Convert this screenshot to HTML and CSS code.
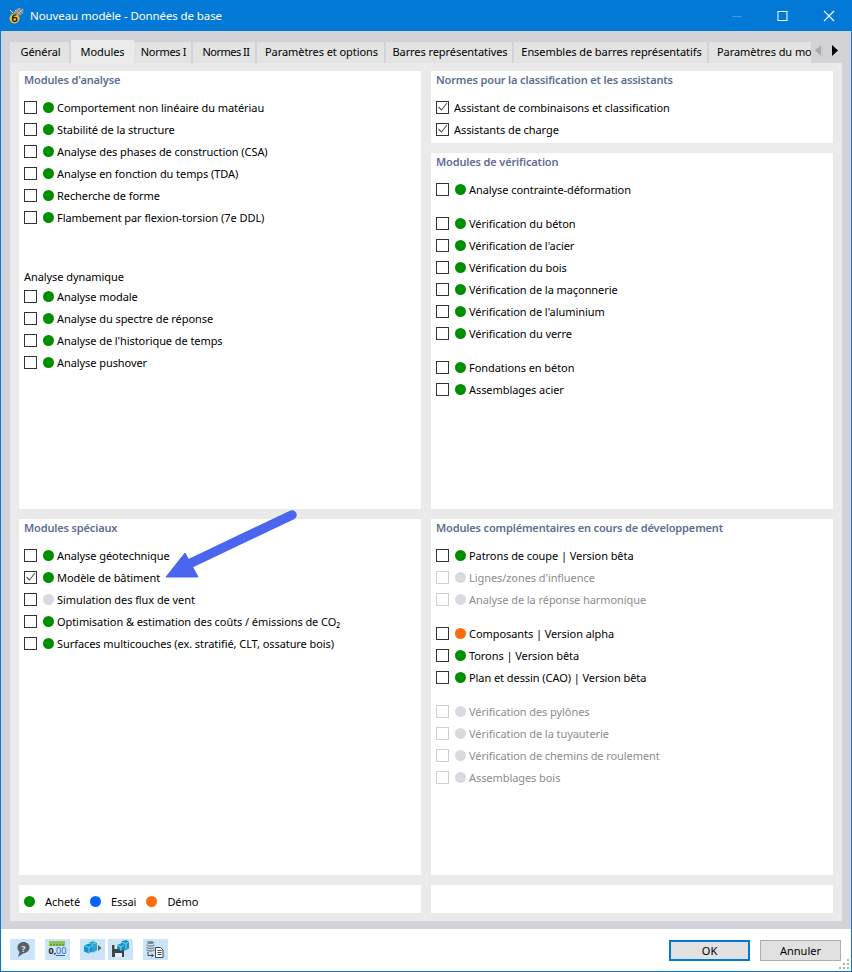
FILE: index.html
```html
<!DOCTYPE html>
<html lang="fr">
<head>
<meta charset="utf-8">
<title>Nouveau modèle - Données de base</title>
<link rel="stylesheet" href="styles.css">
</head>
<body>
<div class="window">
  <header class="titlebar">
    <svg class="app-icon" width="20" height="20" viewBox="0 0 20 20"><path d="M6 6 L11 2 L17 3 L16 8 L11 10Z" fill="#7f828c"/><path d="M8 4l6 5M11 3l5 4M7 7l6-5M10 9l6-6" stroke="#c9ccd4" stroke-width=".7"/><path d="M3 4l3 3" stroke="#e8e2c8" stroke-width="1"/><circle cx="7.500" cy="12.500" r="5" fill="#eec02f"/><path d="M9.500 9c-2-.6-4 .6-4 3.400 0 2 1 3 2.200 3s2.100-.9 2.100-2-.9-1.900-2-1.900-1.800.5-2.100 1.100" fill="none" stroke="#30250a" stroke-width="1.400"/></svg>
    <span class="title">Nouveau modèle - Données de base</span>
    <div class="win-controls">
      <svg width="46" height="30" viewBox="0 0 46 30"><path d="M18 15.500h10" stroke="#3f96e0" stroke-width="1"/></svg>
      <svg width="46" height="30" viewBox="0 0 46 30"><rect x="18" y="10.500" width="9" height="9" fill="none" stroke="#fff" stroke-width="1"/></svg>
      <svg width="46" height="30" viewBox="0 0 46 30"><path d="M18 10l10 10M28 10l-10 10" stroke="#fff" stroke-width="1.100"/></svg>
    </div>
  </header>
  <div class="body">
    <div class="tabstrip">
      <div class="tabs">
        <span class="tab">Général</span>
        <span class="tab active">Modules</span>
        <span class="tab">Normes I</span>
        <span class="tab">Normes II</span>
        <span class="tab">Paramètres et options</span>
        <span class="tab">Barres représentatives</span>
        <span class="tab">Ensembles de barres représentatifs</span>
        <span class="tab">Paramètres du modèle</span>
      </div>
      <div class="tab-arrows">
        <svg width="11" height="13" viewBox="0 0 11 13"><path d="M6 1v11L0 6.500z" fill="#a9a9ad"/><path d="M7.500 1v11" stroke="#c6c6ca"/></svg>
        <svg width="9" height="13" viewBox="0 0 9 13"><path d="M1 1v11l6-5.500z" fill="#000"/></svg>
      </div>
    </div>
    <div class="sheet">
      <section class="panel p-analysis">
        <h2>Modules d'analyse</h2>
        <div class="group">
          <label class="row"><i class="cb"></i><i class="dot g"></i><span>Comportement non linéaire du matériau</span></label>
          <label class="row"><i class="cb"></i><i class="dot g"></i><span>Stabilité de la structure</span></label>
          <label class="row"><i class="cb"></i><i class="dot g"></i><span>Analyse des phases de construction (CSA)</span></label>
          <label class="row"><i class="cb"></i><i class="dot g"></i><span>Analyse en fonction du temps (TDA)</span></label>
          <label class="row"><i class="cb"></i><i class="dot g"></i><span>Recherche de forme</span></label>
          <label class="row"><i class="cb"></i><i class="dot g"></i><span>Flambement par flexion-torsion (7e DDL)</span></label>
        </div>
        <div class="subhead">Analyse dynamique</div>
        <div class="group tight">
          <label class="row"><i class="cb"></i><i class="dot g"></i><span>Analyse modale</span></label>
          <label class="row"><i class="cb"></i><i class="dot g"></i><span>Analyse du spectre de réponse</span></label>
          <label class="row"><i class="cb"></i><i class="dot g"></i><span>Analyse de l'historique de temps</span></label>
          <label class="row"><i class="cb"></i><i class="dot g"></i><span>Analyse pushover</span></label>
        </div>
      </section>
      <div class="col-right-top">
        <section class="panel p-norms">
          <h2>Normes pour la classification et les assistants</h2>
          <div class="group">
            <label class="row nodot"><i class="cb"><svg class="tick" width="11" height="11" viewBox="0 0 11 11"><path d="M1.500 5l3 3 5.500-7" fill="none" stroke="#555" stroke-width="1.100"/></svg></i><span>Assistant de combinaisons et classification</span></label>
            <label class="row nodot"><i class="cb"><svg class="tick" width="11" height="11" viewBox="0 0 11 11"><path d="M1.500 5l3 3 5.500-7" fill="none" stroke="#555" stroke-width="1.100"/></svg></i><span>Assistants de charge</span></label>
          </div>
        </section>
        <section class="panel p-verif">
          <h2>Modules de vérification</h2>
          <div class="group">
            <label class="row"><i class="cb"></i><i class="dot g"></i><span>Analyse contrainte-déformation</span></label>
          </div>
          <div class="group sep">
            <label class="row"><i class="cb"></i><i class="dot g"></i><span>Vérification du béton</span></label>
            <label class="row"><i class="cb"></i><i class="dot g"></i><span>Vérification de l'acier</span></label>
            <label class="row"><i class="cb"></i><i class="dot g"></i><span>Vérification du bois</span></label>
            <label class="row"><i class="cb"></i><i class="dot g"></i><span>Vérification de la maçonnerie</span></label>
            <label class="row"><i class="cb"></i><i class="dot g"></i><span>Vérification de l'aluminium</span></label>
            <label class="row"><i class="cb"></i><i class="dot g"></i><span>Vérification du verre</span></label>
          </div>
          <div class="group sep">
            <label class="row"><i class="cb"></i><i class="dot g"></i><span>Fondations en béton</span></label>
            <label class="row"><i class="cb"></i><i class="dot g"></i><span>Assemblages acier</span></label>
          </div>
        </section>
      </div>
      <section class="panel p-special">
        <h2>Modules spéciaux</h2>
        <div class="group">
          <label class="row"><i class="cb"></i><i class="dot g"></i><span>Analyse géotechnique</span></label>
          <label class="row"><i class="cb"><svg class="tick" width="11" height="11" viewBox="0 0 11 11"><path d="M1.500 5l3 3 5.500-7" fill="none" stroke="#555" stroke-width="1.100"/></svg></i><i class="dot g"></i><span>Modèle de bâtiment</span></label>
          <label class="row"><i class="cb"></i><i class="dot n"></i><span>Simulation des flux de vent</span></label>
          <label class="row"><i class="cb"></i><i class="dot g"></i><span>Optimisation &amp; estimation des coûts / émissions de CO₂</span></label>
          <label class="row"><i class="cb"></i><i class="dot g"></i><span>Surfaces multicouches (ex. stratifié, CLT, ossature bois)</span></label>
        </div>
        <svg class="arrow" width="150" height="80" viewBox="0 0 150 80"><path d="M127 7 L26 55" stroke="#4a66f0" stroke-width="9.500" stroke-linecap="round" fill="none"/><path d="M1 69 L20 45 L33 69Z" fill="#4a66f0" stroke="#4a66f0" stroke-width="1" stroke-linejoin="round"/></svg>
      </section>
      <section class="panel p-dev">
        <h2>Modules complémentaires en cours de développement</h2>
        <div class="group">
          <label class="row"><i class="cb"></i><i class="dot g"></i><span>Patrons de coupe | Version bêta</span></label>
          <label class="row off"><i class="cb"></i><i class="dot n"></i><span>Lignes/zones d'influence</span></label>
          <label class="row off"><i class="cb"></i><i class="dot n"></i><span>Analyse de la réponse harmonique</span></label>
        </div>
        <div class="group sep">
          <label class="row"><i class="cb"></i><i class="dot o"></i><span>Composants | Version alpha</span></label>
          <label class="row"><i class="cb"></i><i class="dot g"></i><span>Torons | Version bêta</span></label>
          <label class="row"><i class="cb"></i><i class="dot g"></i><span>Plan et dessin (CAO) | Version bêta</span></label>
        </div>
        <div class="group sep">
          <label class="row off"><i class="cb"></i><i class="dot n"></i><span>Vérification des pylônes</span></label>
          <label class="row off"><i class="cb"></i><i class="dot n"></i><span>Vérification de la tuyauterie</span></label>
          <label class="row off"><i class="cb"></i><i class="dot n"></i><span>Vérification de chemins de roulement</span></label>
          <label class="row off"><i class="cb"></i><i class="dot n"></i><span>Assemblages bois</span></label>
        </div>
      </section>
      <section class="panel legend">
        <i class="dot g"></i><span class="lg-a">Acheté</span>
        <i class="dot b"></i><span class="lg-b">Essai</span>
        <i class="dot o"></i><span>Démo</span>
      </section>
      <section class="panel"></section>
    </div>
  </div>
  <footer class="footer">
    <div class="tools">
      <button class="tool"><svg width="25" height="21" viewBox="0 0 25 21"><path d="M13.500 3c3.500 0 6 2.400 6 5.500s-2.500 5.500-5.500 5.500L8 18l1.500-5C8 12 7.500 10 7.500 8.500 7.500 5.400 10 3 13.500 3z" fill="#5a6066"/><text x="13.500" y="12.500" text-anchor="middle" class="q">?</text></svg></button>
      <button class="tool"><svg width="25" height="21" viewBox="0 0 25 21"><rect x="4" y="2" width="16" height="5" fill="#8fc35a"/><path d="M6 5v2M9 5v2M12 5v2M15 5v2M18 5v2" stroke="#4c7c2a"/><text x="3.500" y="15" class="n0">0,</text><text x="11" y="15" class="n1">00</text><path d="M11 16.500h9" stroke="#2c6fc4"/></svg></button>
      <button class="tool"><svg width="25" height="21" viewBox="0 0 25 21"><path d="M4 6.500l5-2 4 1.500v6l-4 2.500-5-2z" fill="#0f96c8"/><path d="M9 3.500l4-1.500 4 1.500v8l-4 2-1-.5V6z" fill="#2ba7d4"/><path d="M4 6.500l5 2 4-2.500M9 8.500v6M13 4.500l4-1" stroke="#bfe4f2" stroke-width=".7" fill="none"/><path d="M18 6v6l3.500-3z" fill="#5a6066"/></svg></button>
      <button class="tool"><svg width="25" height="21" viewBox="0 0 25 21"><path d="M4 6h10l2 2v10H4z" fill="#3c4650"/><rect x="6.500" y="6" width="6" height="4" fill="#e9eef2"/><rect x="7" y="14" width="7" height="4" fill="#e9eef2"/><path d="M9 6l4-1.500 1-2.500 4-1 3 1.500v7l-4 2-2-1-2 1-4-2z" fill="#0f96c8"/><path d="M9 6l4 2 3-2M13 8v4M14 3l4 2 3-2.500M18 5v5" stroke="#bfe4f2" stroke-width=".7" fill="none"/></svg></button>
      <button class="tool"><svg width="25" height="21" viewBox="0 0 25 21"><ellipse cx="7.500" cy="3.500" rx="3.500" ry="1.500" fill="#7d8790"/><path d="M4 5.500c0 2 7 2 7 0M4 8c0 2 7 2 7 0M4 10.500c0 2 7 2 7 0" stroke="#7d8790" stroke-width="1.300" fill="none"/><path d="M5 13v3.500h5" stroke="#3c4650" fill="none"/><path d="M8.500 15l2 1.500-2 1.500" stroke="#3c4650" fill="none"/><path d="M12.500 8.500h5l2.500 2.500v7.500h-7.500z" fill="#fff" stroke="#3c4650"/><path d="M14.500 11.500h4M14.500 13.500h4M14.500 15.500h4" stroke="#3c4650"/></svg></button>
    </div>
    <div class="actions">
      <button class="btn primary">OK</button>
      <button class="btn">Annuler</button>
    </div>
    <svg class="grip" width="12" height="12" viewBox="0 0 12 12"><path d="M9 1h2v2H9zM5 5h2v2H5zM9 5h2v2H9zM1 9h2v2H1zM5 9h2v2H5zM9 9h2v2H9z" fill="#b3b3b3"/></svg>
  </footer>
</div>
</body>
</html>
```
FILE: styles.css
```css
* { box-sizing: border-box; }
html, body { margin: 0; padding: 0; }
body { width: 852px; height: 972px; overflow: hidden; font-family: "Noto Sans", "Open Sans", sans-serif; font-size: 11px; color: #000; background: #fff; }
.window { width: 852px; height: 972px; border: 1px solid #0278d7; border-top: 0; display: flex; flex-direction: column; }
.titlebar { flex: none; height: 31px; background: #0278d7; color: #fff; display: flex; align-items: center; padding-left: 7px; margin: 0 -1px; }
.app-icon { flex: none; }
.title { margin-left: 3px; font-size: 11.5px; letter-spacing: -.1px; }
.win-controls { margin-left: auto; display: flex; }
.win-controls svg { display: block; }
.body { flex: none; height: 898px; background: #d3d2d7; padding: 11px 9px 8px 9px; display: flex; flex-direction: column; }
.tabstrip { flex: none; height: 21px; display: flex; }
.tabs { flex: none; width: 801px; display: flex; height: 21px; clip-path: inset(-3px 0 0 0); }
.tab { flex: none; height: 21px; padding-left: 2px; line-height: 20px; background: #e3e3e3; border-right: 2px solid #d3d2d7; letter-spacing: -.07px; white-space: nowrap; text-align: center; }
.tab:nth-child(1) { width: 61px; }
.tab:nth-child(2) { width: 63px; }
.tab:nth-child(3) { width: 59px; padding-left: 2px; letter-spacing: -.3px; }
.tab:nth-child(4) { width: 64px; padding-left: 4px; letter-spacing: -.5px; }
.tab:nth-child(5) { width: 129px; }
.tab:nth-child(6) { width: 128px; }
.tab:nth-child(7) { width: 195px; }
.tab:nth-child(8) { width: 120px; text-align: left; padding-left: 8px; }
.tab.active { background: #eaeaea; height: 23px; margin-top: -2px; padding-left: 0; line-height: 24px; border-right: 0; }
.tab-arrows { display: flex; margin: 2px 0 0 4px; align-items: flex-start; gap: 5px; height: 13px; }
.tab-arrows svg { display: block; }
.sheet { flex: none; height: 858px; background: #eaeaea; padding: 8px 9px; display: grid; grid-template-columns: 402px 402px; grid-template-rows: 438px 356px 28px; gap: 10px; }
.col-right-top { display: grid; grid-template-rows: 72px 356px; gap: 10px; }
.panel { background: #fff; padding: 0 5px; position: relative; }
h2 { margin: 0; font-size: 11px; font-weight: 600; color: #5d6d94; height: 18px; line-height: 18px; letter-spacing: -.15px; }
.group { margin-top: 7px; }
.group.tight { margin-top: 0; }
.group.sep { margin-top: 12px; }
.row { display: flex; align-items: center; height: 22px; letter-spacing: -.07px; white-space: nowrap; }
.cb { flex: none; width: 13px; height: 13px; border: 1px solid #333; background: #fff; margin-right: 6px; position: relative; }
.row.nodot .cb { margin-right: 5px; }
.tick { position: absolute; left: 0; top: 0; display: block; }
.dot { flex: none; width: 11px; height: 11px; border-radius: 50%; margin-right: 3px; }
.dot.g { background: #008f00; }
.dot.n { background: #d9d9df; }
.dot.o { background: #ff6a0a; }
.dot.b { background: #0a64ff; }
.row.off { color: #8c8c8c; }
.row.off .cb { border-color: #cfcfcf; }
.subhead { margin-top: 40px; height: 17px; line-height: 17px; letter-spacing: -.07px; }
.arrow { position: absolute; left: 146px; top: -11px; }
.legend { display: flex; align-items: center; padding: 4px 0 0 5px; letter-spacing: -.07px; }
.legend .dot { margin-right: 10px; }
.lg-a { margin-right: 10px; }
.lg-b { margin-right: 10px; }
.footer { flex: 1; display: flex; align-items: flex-start; padding: 10px 10px 0 9px; position: relative; }
.tools { display: flex; }
.tool { width: 25px; height: 21px; border: 0; padding: 0; background: #cce4f7; margin-right: 10px; display: block; }
.tool:nth-child(3) { margin-right: 3px; }
.tool svg { display: block; }
.q { font: bold 9px "Noto Sans", sans-serif; fill: #cce4f7; }
.n0 { font: bold 9px "Noto Sans", sans-serif; fill: #222; }
.n1 { font: 9px "Noto Sans", sans-serif; fill: #2c6fc4; }
.actions { margin-left: auto; display: flex; gap: 10px; margin-top: 1px; }
.btn { width: 81px; height: 21px; border: 1px solid #adadad; background: #e1e1e1; font: 11px "Noto Sans", sans-serif; padding: 0; color: #000; }
.btn.primary { border: 2px solid #0278d7; }
.grip { position: absolute; right: 1px; bottom: 1px; }
```
